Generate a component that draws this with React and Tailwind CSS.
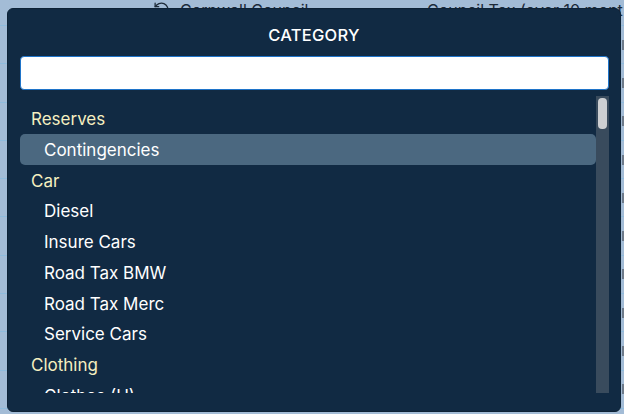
import { RotateCcw } from 'lucide-react';

const font = "font-['Inter',sans-serif]";

const items = [
  { label: 'Reserves', group: true },
  { label: 'Contingencies', selected: true },
  { label: 'Car', group: true },
  { label: 'Diesel' },
  { label: 'Insure Cars' },
  { label: 'Road Tax BMW' },
  { label: 'Road Tax Merc' },
  { label: 'Service Cars' },
  { label: 'Clothing', group: true },
  { label: 'Clothes (U)' },
];

function BackdropRow() {
  return (
    <div className="h-[38.3px] shrink-0 border-b border-[#8fbbdc] flex justify-end items-center">
      <div className="w-[2px] h-[10px] bg-[#6d7a8a]" />
    </div>
  );
}

export default function App() {
  return (
    <div className={`relative w-[624px] h-[414px] overflow-hidden bg-[#a3bcd6] ${font}`}>
      <div className="flex flex-col h-full">
        <div className="h-[26px] shrink-0 border-b border-[#8fbbdc] flex items-start text-[16px] leading-[20px] text-[#1c2a38]">
          <RotateCcw className="ml-[153px] mt-[1px] shrink-0" size={17} strokeWidth={1.8} />
          <span className="ml-[10px] w-[247px] shrink-0">Cornwall Council</span>
          <span className="whitespace-nowrap shrink-0">Council Tax (over 10 mont</span>
        </div>
        {Array.from({ length: 10 }).map((_, i) => (
          <BackdropRow key={i} />
        ))}
      </div>

      <div className="absolute left-[7px] top-[8px] w-[614px] h-[404px] rounded-[6px] bg-[#112a43] border border-[#0d2236] flex flex-col overflow-hidden">
        <h2 className="text-center text-white text-[16.5px] leading-[20px] font-medium mt-[16px] tracking-[0.25px]">CATEGORY</h2>
        <input
          type="text"
          className="ml-[12px] w-[589px] mt-[11px] h-[34px] shrink-0 rounded-[4px] bg-white border-[1.5px] border-[#1f74c9] outline-none"
        />
        <div className="flex mt-[6px] ml-[12px] mr-[4px] h-[297px] shrink-0">
          <ul className="flex-1 overflow-hidden text-[17px] pt-[7px]">
            {items.map((item) =>
              item.group ? (
                <li key={item.label} className="h-[30.75px] leading-[33.5px] pl-[11px] text-[#f5efc0]">
                  {item.label}
                </li>
              ) : (
                <li
                  key={item.label}
                  className={`h-[30.75px] leading-[33.5px] pl-[24px] text-white rounded-[5px] ${item.selected ? 'bg-[#4b6880]' : ''}`}
                >
                  {item.label}
                </li>
              )
            )}
          </ul>
          <div className="w-[13px] mr-[7px] shrink-0 bg-[#394b5d] pt-[2px] flex justify-center">
            <div className="w-[9px] h-[31px] rounded-[4px] bg-[#cdcfd2]" />
          </div>
        </div>
      </div>
    </div>
  );
}
